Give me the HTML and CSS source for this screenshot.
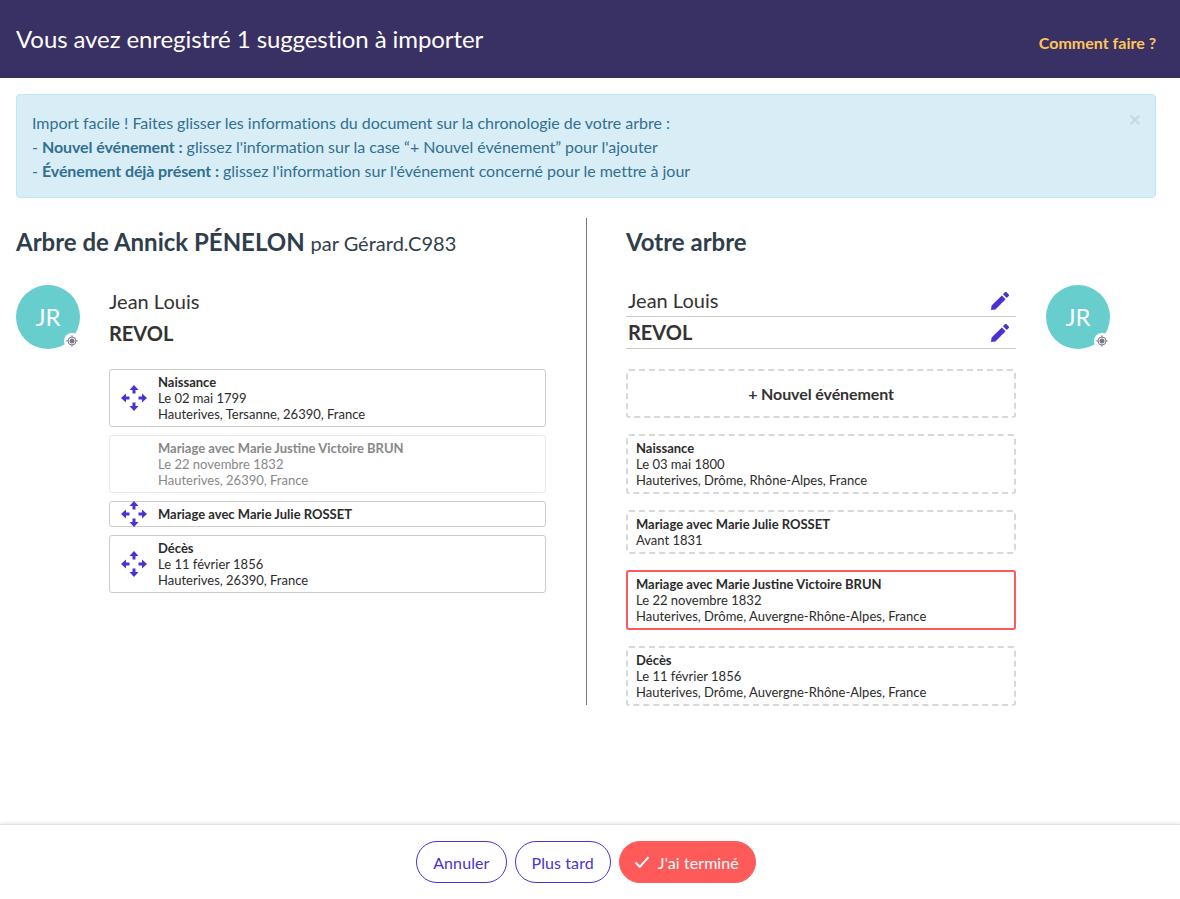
FILE: index.html
```html
<!DOCTYPE html>
<html lang="fr">
<head>
<meta charset="utf-8">
<title>Import</title>
<link rel="stylesheet" href="styles.css">
</head>
<body>
<svg class="defs" width="0" height="0" aria-hidden="true">
  <symbol id="move" viewBox="0 0 26 26">
    <path d="M13 0 17.5 5H14.5V8.5H11.5V5H8.5Z M13 26 8.5 21H11.5V17.5H14.5V21H17.5Z M0 13 5 8.5V11.5H8.5V14.5H5V17.5Z M26 13 21 17.5V14.5H17.5V11.5H21V8.5Z" fill="currentColor"/>
  </symbol>
  <symbol id="pen" viewBox="0 0 20 20">
    <path d="M1 19 1.6 14.6 11.8 4.4 15.6 8.2 5.4 18.4Z M13 3.2 14.9 1.3C15.4.8 16.1.8 16.6 1.3L18.7 3.4C19.2 3.9 19.2 4.6 18.7 5.1L16.8 7Z" fill="currentColor"/>
  </symbol>
  <symbol id="target" viewBox="0 0 12 12">
    <circle cx="6" cy="6" r="2.5" fill="currentColor"/>
    <circle cx="6" cy="6" r="4" fill="none" stroke="currentColor" stroke-width="1"/>
    <path d="M6 .3V2.2M6 9.8V11.7M.3 6H2.2M9.8 6H11.7" stroke="currentColor" stroke-width="1"/>
  </symbol>
</svg>

<header class="topbar">
  <h1 class="topbar-title">Vous avez enregistré 1 suggestion à importer</h1>
  <a class="topbar-help">Comment faire ?</a>
</header>

<div class="alert">
  <span class="alert-close">×</span>
  <div>Import facile ! Faites glisser les informations du document sur la chronologie de votre arbre :</div>
  <div>- <b>Nouvel événement :</b> glissez l'information sur la case “+ Nouvel événement” pour l'ajouter</div>
  <div>- <b>Événement déjà présent :</b> glissez l'information sur l'événement concerné pour le mettre à jour</div>
</div>

<main class="columns">
  <section class="col-left">
    <h2 class="col-title">Arbre de Annick PÉNELON <small>par Gérard.C983</small></h2>
    <div class="person">
      <div class="avatar">JR<span class="avatar-badge"><svg><use href="#target"/></svg></span></div>
      <div class="person-main">
        <div class="first-name">Jean Louis</div>
        <div class="last-name">REVOL</div>
        <div class="source-list">
          <div class="source">
            <svg class="move"><use href="#move"/></svg>
            <div><b>Naissance</b><br>Le 02 mai 1799<br>Hauterives, Tersanne, 26390, France</div>
          </div>
          <div class="source source-done">
            <span class="move"></span>
            <div><b>Mariage avec Marie Justine Victoire BRUN</b><br>Le 22 novembre 1832<br>Hauterives, 26390, France</div>
          </div>
          <div class="source source-slim">
            <svg class="move"><use href="#move"/></svg>
            <div><b>Mariage avec Marie Julie ROSSET</b></div>
          </div>
          <div class="source">
            <svg class="move"><use href="#move"/></svg>
            <div><b>Décès</b><br>Le 11 février 1856<br>Hauterives, 26390, France</div>
          </div>
        </div>
      </div>
    </div>
  </section>

  <section class="col-right">
    <h2 class="col-title">Votre arbre</h2>
    <div class="person">
      <div class="person-edit">
        <div class="name-field first-name">Jean Louis<svg class="pen"><use href="#pen"/></svg></div>
        <div class="name-field last-name">REVOL<svg class="pen"><use href="#pen"/></svg></div>
        <div class="new-event">+ Nouvel événement</div>
        <div class="target"><b>Naissance</b><br>Le 03 mai 1800<br>Hauterives, Drôme, Rhône-Alpes, France</div>
        <div class="target"><b>Mariage avec Marie Julie ROSSET</b><br>Avant 1831</div>
        <div class="target target-active"><b>Mariage avec Marie Justine Victoire BRUN</b><br>Le 22 novembre 1832<br>Hauterives, Drôme, Auvergne-Rhône-Alpes, France</div>
        <div class="target"><b>Décès</b><br>Le 11 février 1856<br>Hauterives, Drôme, Auvergne-Rhône-Alpes, France</div>
      </div>
      <div class="avatar">JR<span class="avatar-badge"><svg><use href="#target"/></svg></span></div>
    </div>
  </section>
</main>

<footer class="actions">
  <button class="btn btn-cancel">Annuler</button>
  <button class="btn">Plus tard</button>
  <button class="btn btn-primary"><svg class="check" viewBox="0 0 16 14"><path d="M1.5 7.5 5.8 11.8 14.5 2.2" fill="none" stroke="currentColor" stroke-width="2"/></svg>J'ai terminé</button>
</footer>
</body>
</html>
```
FILE: styles.css
```css
* { box-sizing: border-box; }
html, body { margin: 0; padding: 0; }
body {
  width: 1180px;
  height: 899px;
  overflow: hidden;
  background: #fff;
  color: #2b2b2b;
  font-family: Lato, sans-serif;
  font-size: 13px;
  line-height: 16px;
  position: relative;
}
.defs { position: absolute; }
.topbar {
  height: 78px;
  background: #393064;
  display: flex;
  align-items: center;
  justify-content: space-between;
  padding: 0 24px 0 16px;
}
.topbar-title { margin: 0; font-size: 24px; font-weight: 400; color: #fff; line-height: 82px; letter-spacing: -0.09px; }
.topbar-help { color: #ffc65c; font-size: 16px; font-weight: 700; padding-top: 7px; }
.alert {
  position: relative;
  margin: 16px 24px 0 16px;
  height: 104px;
  padding: 16px 15px;
  background: #d9edf7;
  border: 1px solid #bce8f1;
  border-radius: 4px;
  color: #31708f;
  font-size: 16px;
  line-height: 24px;
  letter-spacing: -0.03px;
}
.alert b { letter-spacing: -0.1px; }
.alert-close {
  position: absolute;
  top: 12px;
  right: 14px;
  font-size: 21px;
  font-weight: 700;
  color: #c3d9e4;
}
.columns { display: flex; margin-top: 20px; height: 487px; }
.col-left { width: 587px; padding-left: 16px; border-right: 1px solid #777; }
.col-right { padding-left: 39px; }
.col-title {
  margin: 0;
  height: 50px;
  font-size: 24px;
  line-height: 48px;
  font-weight: 700;
  color: #2f3e4c;
}
.col-title small { font-size: 20px; font-weight: 400; }
.person { display: flex; margin-top: 17px; }
.avatar {
  position: relative;
  flex: none;
  width: 64px;
  height: 64px;
  border-radius: 50%;
  background: #67cdcd;
  color: #fff;
  font-size: 24px;
  line-height: 64px;
  text-align: center;
}
.avatar-badge {
  position: absolute;
  right: 0;
  bottom: 0;
  width: 16px;
  height: 16px;
  padding: 2px;
  border-radius: 50%;
  background: #fff;
  color: #77778a;
  display: flex;
}
.avatar-badge svg { width: 12px; height: 12px; }
.person-main { margin-left: 29px; width: 437px; }
.first-name { font-size: 20px; line-height: 32px; color: #333; }
.last-name { font-size: 20px; line-height: 32px; font-weight: 700; color: #333; }
.source-list { margin-top: 20px; display: flex; flex-direction: column; gap: 8px; }
.source {
  display: flex;
  align-items: center;
  padding: 4px 8px;
  min-height: 26px;
  border: 1px solid #ccc;
  border-radius: 3px;
  background: #fff;
}
.source b, .target b { font-weight: 700; }
.source .move { flex: none; width: 26px; height: 26px; margin: 0 11px 0 3px; color: #4733cf; }
.source-done { border-color: #e8e8e8; color: #888; }
.source-slim { height: 26px; }
.person-edit { width: 390px; margin-right: 30px; }
.name-field {
  display: flex;
  justify-content: space-between;
  align-items: center;
  height: 32px;
  padding: 0 6px 2px 2px;
  border-bottom: 1px solid #ccc;
}
.pen { width: 20px; height: 20px; margin-top: 2px; color: #4733cf; }
.new-event {
  margin-top: 20px;
  height: 49px;
  border: 2px dashed #d8d8d8;
  border-radius: 3px;
  text-align: center;
  font-size: 16px;
  font-weight: 700;
  line-height: 45px;
  color: #333;
  letter-spacing: -0.1px;
}
.target {
  margin-top: 16px;
  padding: 4px 8px;
  border: 2px dashed #d8d8d8;
  border-radius: 3px;
}
.target.target-active { border: 2px solid #ff5a5a; }
.actions {
  position: absolute;
  left: 0;
  right: 0;
  bottom: 0;
  height: 75px;
  border-top: 1px solid #e2e2e2;
  box-shadow: 0 -1px 3px rgba(0, 0, 0, .1);
  display: flex;
  justify-content: center;
  gap: 8px;
  padding: 16px 8px 0 0;
}
.btn {
  height: 42px;
  padding: 0 16px;
  border: 1px solid #4733cf;
  border-radius: 21px;
  background: #fff;
  color: #4733cf;
  font-family: Lato, sans-serif;
  font-size: 16px;
  letter-spacing: 0.1px;
  display: flex;
  align-items: center;
}
.btn-primary { padding: 0 16px 0 14px; background: #ff5a5a; border-color: #ff5a5a; color: #fff; letter-spacing: 0.08px; }
.check { width: 16px; height: 14px; margin-right: 8px; }
```
